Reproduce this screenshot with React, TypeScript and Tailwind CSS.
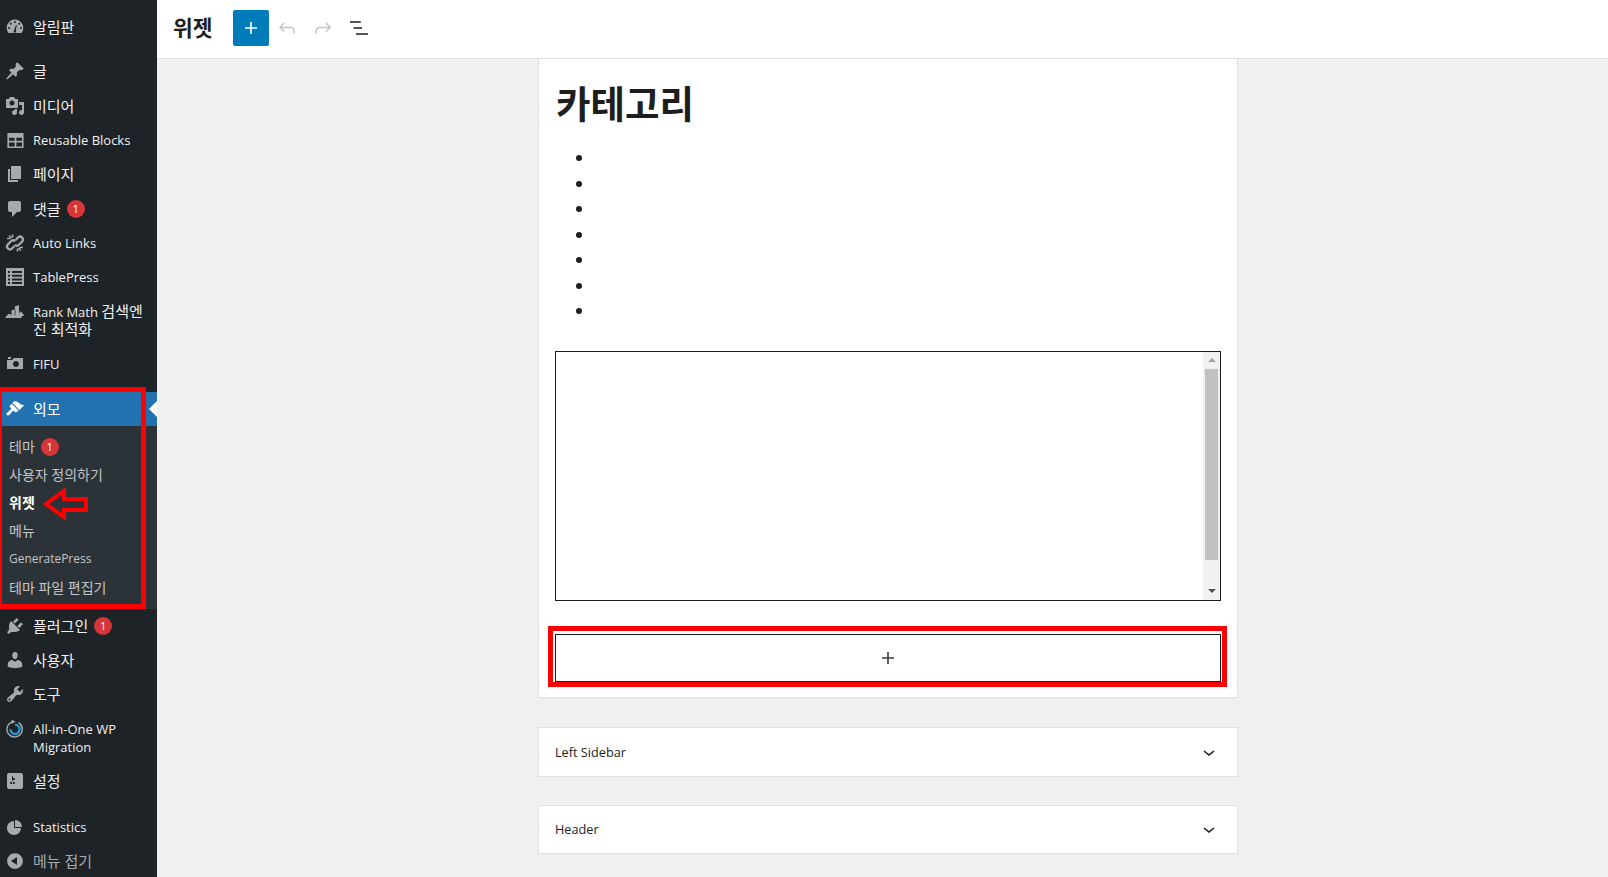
import type { ReactNode } from "react";

const FONT = "font-['Open_Sans','Noto_Sans_CJK_KR',sans-serif]";

function Dashicon({ d, size = 20, evenOdd = false }: { d: string; size?: number; evenOdd?: boolean }) {
  return (
    <svg viewBox="0 0 20 20" width={size} height={size} fill="currentColor">
      <path d={d} fillRule={evenOdd ? "evenodd" : "nonzero"} />
    </svg>
  );
}

function Dashboard() {
  return (
    <svg viewBox="0 0 20 20" className="h-[20px] w-[20px]" fill="currentColor">
      <path d="M10 2.500a8.300 8.300 0 0 0-8.300 8.300c0 1.900.6 3.700 1.800 5.200h13A8.300 8.300 0 0 0 18.300 10.800 8.300 8.300 0 0 0 10 2.500z" />
      <g fill="#1d2327">
        <circle cx="10" cy="5" r="1" />
        <circle cx="5.800" cy="6.800" r="1" />
        <circle cx="14.200" cy="6.800" r="1" />
        <circle cx="4" cy="11" r="1" />
        <circle cx="16" cy="11" r="1" />
        <path d="M8.300 15.500 11 8l.8.3-.9 4.700a2 2 0 0 1-.2 2.500z" />
      </g>
    </svg>
  );
}

function TableIcon() {
  return (
    <svg viewBox="0 0 20 20" className="h-[19px] w-[19px]" fill="currentColor">
      <path
        fillRule="evenodd"
        d="M1.500 2h17v16h-17zM3.200 7v3.200h5.900V7zm7.700 0v3.200h5.900V7zM3.200 12v4.200h5.900V12zm7.700 0v4.200h5.900V12z"
      />
    </svg>
  );
}

function AutoLinks() {
  return (
    <svg viewBox="0 0 20 20" className="h-[20px] w-[20px]" fill="none" stroke="currentColor" strokeWidth="2.300">
      <path d="M10.500 7 13 4.500a2.900 2.900 0 0 1 4.100 4.100l-3.200 3.200a2.900 2.900 0 0 1-4.100 0" />
      <path d="M9.500 13 7 15.500a2.900 2.900 0 0 1-4.100-4.100l3.200-3.200a2.900 2.900 0 0 1 4.100 0" />
      <path d="M2 5.500h3.500M4 2.500l2.500 2.500M7.500 1.500v3M18 14.500h-3.500M16 17.500 13.500 15M12.500 18.500v-3" strokeWidth="1.600" />
    </svg>
  );
}

function ListTable() {
  return (
    <svg viewBox="0 0 20 20" className="h-[20px] w-[20px]" fill="currentColor">
      <path
        fillRule="evenodd"
        d="M1 1h18v18H1zM3 4v2h2V4zm4 0v2h10V4zM3 7.700v2h2v-2zm4 0v2h10v-2zM3 11.400v2h2v-2zm4 0v2h10v-2zM3 15v2h2v-2zm4 0v2h10v-2z"
      />
    </svg>
  );
}

function RankMath() {
  return (
    <svg viewBox="0 0 20 20" className="h-[20px] w-[20px]" fill="currentColor">
      <path d="M0 17l3.200-4H6V9.500L9.800 8.500V5.500L14 4v8.500l1.600-2.300 3.900 4.300-2.400.5-.9 2z" />
      <path d="M6.200 9.500v5M10 8.500v6" stroke="#1d2327" strokeWidth=".7" />
    </svg>
  );
}

function Migration() {
  return (
    <svg viewBox="0 0 20 20" className="h-[20px] w-[20px]" fill="none">
      <path d="M13.700 3.700A7.700 7.700 0 1 1 7.500 2.800" stroke="#a7aaad" strokeWidth="1.400" />
      <path d="M6.500.5 10.500 2.800 6.500 5z" fill="#a7aaad" />
      <path d="M10 5.700a4.600 4.600 0 1 1-4.600 4.600" stroke="#1f9ad6" strokeWidth="2.400" />
    </svg>
  );
}

function Badge() {
  return (
    <span className="flex h-[18px] w-[18px] items-center justify-center rounded-full bg-[#d63638] text-[11px] leading-none text-white">
      1
    </span>
  );
}

// hangul and latin sit at different sizes in the shot, so split the runs.
// "\n" in a label marks a line break
function Mixed({ text, ko, latin }: { text: string; ko: string; latin: string }) {
  return (
    <div className="flex flex-col">
      {text.split("\n").map((line) => (
        <div key={line} className="flex h-[18px] items-baseline whitespace-pre leading-[18px]">
          {line
            .split(/([\uac00-\ud7a3][\uac00-\ud7a3 ]*)/)
            .filter(Boolean)
            .map((run, i) => (
              <span key={i} className={/[\uac00-\ud7a3]/.test(run) ? ko : latin}>
                {run}
              </span>
            ))}
        </div>
      ))}
    </div>
  );
}

type MenuItem = {
  label: string;
  icon: ReactNode;
  badge?: boolean;
  tall?: boolean;
  gap?: string;
  muted?: boolean;
};

const topItems: MenuItem[] = [
  { label: "알림판", icon: <Dashboard /> },
  {
    label: "글",
    icon: (
      <Dashicon d="M10.440 3.020l1.820-1.820 6.360 6.350-1.830 1.820c-1.050-.68-2.480-.57-3.410.36l-.75.75c-.92.93-1.040 2.350-.35 3.410l-1.830 1.820-2.410-2.410-2.800 2.790c-.42.42-3.380 2.710-3.800 2.290s1.860-3.390 2.280-3.810l2.790-2.790L4.100 9.360l1.830-1.820c1.050.69 2.480.57 3.400-.36l.75-.75c.93-.92 1.050-2.350.36-3.410z" />
    ),
    gap: "mt-[10px]",
  },
  {
    label: "미디어",
    icon: (
      <Dashicon
        evenOdd
        d="M13 11V4c0-.55-.45-1-1-1h-1.670L9 1H5L3.670 3H2c-.55 0-1 .45-1 1v7c0 .55.45 1 1 1h10c.55 0 1-.45 1-1zM7 4.500c1.380 0 2.500 1.120 2.500 2.500S8.380 9.500 7 9.500 4.500 8.380 4.500 7 5.620 4.500 7 4.500zM14 6h5v10.500c0 1.380-1.120 2.500-2.500 2.500S14 17.880 14 16.500s1.120-2.500 2.500-2.500c.17 0 .34.020.5.050V9h-3V6zm-4 8.050V13h2v3.500c0 1.380-1.120 2.500-2.500 2.500S7 17.880 7 16.500 8.120 14 9.500 14c.17 0 .34.020.5.050z"
      />
    ),
  },
  { label: "Reusable Blocks", icon: <TableIcon /> },
  { label: "페이지", icon: <Dashicon d="M6 15V2h10v13H6zm-1 1h8v2H3V5h2v11z" /> },
  {
    label: "댓글",
    icon: (
      <Dashicon d="M5 2h9c1.100 0 2 .9 2 2v7c0 1.100-.9 2-2 2h-2l-5 5v-5H5c-1.100 0-2-.9-2-2V4c0-1.100.9-2 2-2z" />
    ),
    badge: true,
  },
  { label: "Auto Links", icon: <AutoLinks /> },
  { label: "TablePress", icon: <ListTable /> },
  { label: "Rank Math 검색엔\n진 최적화", icon: <RankMath />, tall: true },
  {
    label: "FIFU",
    icon: (
      <Dashicon
        evenOdd
        d="M6 5V3H3v2h3zm12 10V4H9L7 6H2v9h16zm-7-8c1.660 0 3 1.340 3 3s-1.340 3-3 3-3-1.340-3-3 1.340-3 3-3z"
      />
    ),
  },
];

const bottomItems: MenuItem[] = [
  {
    label: "플러그인",
    icon: (
      <Dashicon d="M13.110 4.360L9.870 7.600 8 5.730l3.240-3.240c.35-.34 1.050-.2 1.560.32.520.51.660 1.210.310 1.550zm-8 1.770l.91-1.120 9.010 9.010-1.190.84c-.71.710-2.630 1.160-3.820 1.160H6.140L4.900 17.260c-.59.590-1.540.59-2.120 0-.59-.58-.59-1.530 0-2.120l1.240-1.240v-3.880c0-1.130.4-3.050 1.090-3.890zm7.260 3.970l3.240-3.240c.34-.35 1.040-.21 1.550.31.520.51.660 1.210.310 1.560l-3.240 3.240z" />
    ),
    badge: true,
  },
  {
    label: "사용자",
    icon: (
      <Dashicon d="M10 9.250c-2.270 0-2.730-3.440-2.730-3.440C7 4.020 7.820 2 9.970 2c2.160 0 2.980 2.020 2.710 3.810 0 0-.41 3.440-2.680 3.440zm0 2.570L12.720 10c2.390 0 4.520 2.330 4.520 4.530v2.490s-3.650 1.130-7.240 1.130c-3.650 0-7.240-1.130-7.240-1.130v-2.490c0-2.250 1.940-4.480 4.470-4.480z" />
    ),
  },
  {
    label: "도구",
    icon: (
      <Dashicon
        evenOdd
        d="M16.680 9.770c-1.340 1.340-3.300 1.670-4.950.99l-5.410 6.520c-.99.99-2.590.99-3.570 0-.99-.98-.99-2.580 0-3.570l6.520-5.420c-.68-1.650-.35-3.610.99-4.950 1.280-1.280 3.120-1.620 4.720-1.060l-2.890 2.890 2.820 2.820 2.860-2.870c.53 1.580.18 3.400-1.090 4.650zM3.810 16.210c.4.390 1.040.39 1.430 0 .4-.4.400-1.040 0-1.430-.39-.4-1.030-.4-1.430 0-.39.39-.39 1.030 0 1.430z"
      />
    ),
  },
  { label: "All-in-One WP\nMigration", icon: <Migration />, tall: true },
  {
    label: "설정",
    icon: (
      <Dashicon
        evenOdd
        d="M18 16V4c0-1.100-.9-2-2-2H4c-1.100 0-2 .9-2 2v12c0 1.100.9 2 2 2h12c1.100 0 2-.9 2-2zM8 11h1c.55 0 1 .45 1 1s-.45 1-1 1H8v1.500c0 .28-.22.5-.5.5s-.5-.22-.5-.5V13H6c-.55 0-1-.45-1-1s.45-1 1-1h1V5.500c0-.28.22-.5.5-.5s.5.22.5.5V7h1c.55 0 1 .45 1 1s-.45 1-1 1h-1v5.500c0 .28-.22.5-.5.5s-.5-.22-.5-.5V9z"
      />
    ),
  },
  {
    label: "Statistics",
    icon: (
      <Dashicon d="M10 10V3c3.870 0 7 3.130 7 7h-7zM9 4v7h7c0 3.870-3.130 7-7 7s-7-3.130-7-7 3.130-7 7-7z" />
    ),
    gap: "mt-[12px]",
  },
  {
    label: "메뉴 접기",
    icon: (
      <Dashicon
        evenOdd
        d="M10 2.160c4.330 0 7.840 3.510 7.840 7.840s-3.510 7.840-7.840 7.840S2.160 14.330 2.160 10 5.670 2.160 10 2.160zM12 14V6l-6 4z"
      />
    ),
    muted: true,
  },
];

const subItems = ["사용자 정의하기", "위젯", "메뉴", "GeneratePress", "테마 파일 편집기"];

function SideItem({ item }: { item: MenuItem }) {
  return (
    <div
      className={`flex shrink-0 ${item.tall ? "h-[52px]" : "h-[34.300px]"} ${item.gap ?? ""} ${
        item.muted ? "text-[#a7aaad]" : "text-[#f0f0f1]"
      }`}
    >
      <div
        className={`flex w-[30px] shrink-0 justify-center text-[#a7aaad] ${
          item.tall ? "items-start pt-[7px]" : "items-center"
        }`}
      >
        {item.icon}
      </div>
      <div className="flex items-center gap-[6px] pl-[3px] pr-[8px]">
        <Mixed text={item.label} ko="text-[15px]" latin="text-[13px]" />
        {item.badge && <Badge />}
      </div>
    </div>
  );
}

function Sidebar() {
  return (
    <aside className="relative flex h-full w-[157px] shrink-0 flex-col overflow-hidden bg-[#1d2327] pt-[10px]">
      {topItems.map((item) => (
        <SideItem key={item.label} item={item} />
      ))}

      <div className="relative mt-[11px] flex h-[34px] shrink-0 items-center bg-[#2271b1] text-white">
        <div className="flex w-[30px] shrink-0 items-center justify-center">
          <Dashicon d="M14.480 11.060L7.410 3.990l1.500-1.500c.5-.56 2.300-.47 3.510.32 1.210.8 1.430 1.280 2.910 2.100 1.180.64 2.450 1.260 4.230.85zm-.71.710L6.700 4.700 4.930 6.470c-.39.39-.39 1.020 0 1.410l1.060 1.060c.39.39.39 1.030 0 1.420-.6.600-1.430 1.150-2.210 1.820-.77.670-1.430 1.300-1.850 1.760-.45.490-.63 1.470.03 2.130.65.650 1.640.48 2.120.04.47-.43 1.100-1.090 1.770-1.860.68-.78 1.220-1.610 1.820-2.210.39-.39 1.030-.39 1.420 0l1.060 1.060c.39.39 1.020.39 1.410 0z" />
        </div>
        <span className="pl-[3px] text-[15px] leading-[18px]">외모</span>
        <span className="absolute right-0 top-[9px] h-0 w-0 border-y-[8px] border-r-[8px] border-y-transparent border-r-white" />
      </div>

      <div className="flex h-[183px] shrink-0 flex-col bg-[#2c3338] py-[7px] text-[#c3c4c7]">
        <div className="flex h-[28.200px] items-center gap-[6px] pl-[9px]">
          <span className="text-[14px] leading-[18px]">테마</span>
          <Badge />
        </div>
        {subItems.map((label) => (
          <div
            key={label}
            className={`flex h-[28.200px] items-center pl-[9px] ${
              label === "위젯" ? "font-bold text-white" : ""
            }`}
          >
            <Mixed text={label} ko="text-[14px]" latin="text-[12px]" />
          </div>
        ))}
      </div>

      {bottomItems.map((item) => (
        <SideItem key={item.label} item={item} />
      ))}

      {/* annotation drawn on top of the screenshot */}
      <div className="absolute left-0 top-[386.500px] h-[222px] w-[146px] border-[5px] border-l-[2px] border-[#ff0000]" />
      <svg
        viewBox="0 0 60 40"
        className="absolute left-[40px] top-[485px] h-[40px] w-[60px]"
        fill="none"
        stroke="#ff0000"
        strokeWidth="4"
      >
        <path d="M6 19 24 6v8h22v11H24v7z" />
      </svg>
    </aside>
  );
}

function Toolbar() {
  return (
    <header className="flex h-[59px] shrink-0 items-center border-b border-[#e0e0e0] bg-white pb-[2px] pl-[16px]">
      <h1 className="w-[60px] text-[21.500px] font-semibold leading-none text-[#1e1e1e]">위젯</h1>
      <button className="flex h-[36px] w-[36px] items-center justify-center rounded-[2px] bg-[#007cba]">
        <svg viewBox="0 0 24 24" className="h-[24px] w-[24px]" fill="white">
          <path d="M18 11.200h-5.200V6h-1.600v5.200H6v1.600h5.200V18h1.600v-5.200H18z" />
        </svg>
      </button>
      <svg viewBox="0 0 24 24" className="ml-[6px] h-[24px] w-[24px]" fill="#c4c4c4">
        <path d="M18.300 11.700c-.6-.6-1.400-.9-2.300-.9H6.700l2.900-3.300-1.100-1-4.500 5L8.500 16l1-1-2.700-2.700H16c.5 0 .9.200 1.300.5 1 1 1 3.400 1 4.500v.3h1.500v-.2c0-1.500 0-4.300-1.500-5.700z" />
      </svg>
      <svg viewBox="0 0 24 24" className="ml-[12px] h-[24px] w-[24px]" fill="#c4c4c4">
        <path d="M15.600 6.500l-1.100 1 2.900 3.300H8c-.9 0-1.700.3-2.300.9-1.400 1.500-1.400 4.200-1.400 5.600v.2h1.500v-.3c0-1.100 0-3.500 1-4.500.3-.3.700-.5 1.300-.5h9.200L14.500 15l1.100 1.100 4.600-4.600-4.600-5z" />
      </svg>
      <svg viewBox="0 0 24 24" className="ml-[12px] h-[24px] w-[24px]" fill="#1e1e1e">
        <path d="M13.800 5.200H3v1.500h10.800zM15 11.200H6.500v1.500H15zM21 17.200H9v1.500h12z" />
      </svg>
    </header>
  );
}

function Chevron() {
  return (
    <svg viewBox="0 0 24 24" className="h-[24px] w-[24px]" fill="#1e1e1e">
      <path d="M17.500 11.600 12 16.100l-5.500-4.500 1-1.200 4.500 3.700 4.500-3.700z" />
    </svg>
  );
}

function WidgetArea({ title }: { title: string }) {
  return (
    <div className="flex h-[49.500px] items-center justify-between border border-[#e0e0e0] bg-white px-[16px] text-[12.700px] text-[#1e1e1e]">
      <span className="pt-[1px]">{title}</span>
      <Chevron />
    </div>
  );
}

function Scrollbar() {
  return (
    <div className="flex w-[17px] shrink-0 flex-col items-center bg-[#f1f1f1]">
      <div className="flex h-[17px] w-full items-center justify-center">
        <span className="h-0 w-0 border-x-[4px] border-b-[4px] border-x-transparent border-b-[#a3a3a3]" />
      </div>
      <div className="h-[191px] w-[13px] bg-[#c1c1c1]" />
      <div className="mt-auto flex h-[17px] w-full items-center justify-center">
        <span className="h-0 w-0 border-x-[4px] border-t-[4px] border-x-transparent border-t-[#505050]" />
      </div>
    </div>
  );
}

export default function App() {
  return (
    <div className={`flex h-screen w-full overflow-hidden bg-[#f0f0f0] ${FONT}`}>
      <Sidebar />
      <div className="flex min-w-0 flex-1 flex-col">
        <Toolbar />
        <main className="flex-1 overflow-hidden">
          <div className="ml-[381px] w-[700px]">
            <section className="h-[639px] border border-t-0 border-[#e0e0e0] bg-white px-[16px]">
              <h2 className="pl-[1px] pt-[20px] text-[37.500px] font-bold leading-[50px] text-[#1e1e1e]">카테고리</h2>
              <ul className="mt-[16px] list-disc pl-[39px] text-[16px] leading-[25.500px] text-[#1e1e1e]">
                {Array.from({ length: 7 }).map((_, i) => (
                  <li key={i}>&nbsp;</li>
                ))}
              </ul>
              <div className="mt-[27px] flex h-[250px] border border-[#1e1e1e] bg-white">
                <div className="flex-1" />
                <Scrollbar />
              </div>
              <div className="-ml-[7px] -mr-[6px] mt-[25.500px] h-[61px] border-[5px] border-[#ff0000] pl-[2px] pr-[1px] pt-[3px]">
                <button className="flex h-full w-full items-center justify-center border border-[#1e1e1e] bg-white">
                  <svg viewBox="0 0 24 24" className="h-[24px] w-[24px]" fill="#3c3c3c">
                    <path d="M18 11.200h-5.200V6h-1.600v5.200H6v1.600h5.200V18h1.600v-5.200H18z" />
                  </svg>
                </button>
              </div>
            </section>
            <div className="mt-[29px] flex flex-col gap-[28px]">
              <WidgetArea title="Left Sidebar" />
              <WidgetArea title="Header" />
            </div>
          </div>
        </main>
      </div>
    </div>
  );
}
